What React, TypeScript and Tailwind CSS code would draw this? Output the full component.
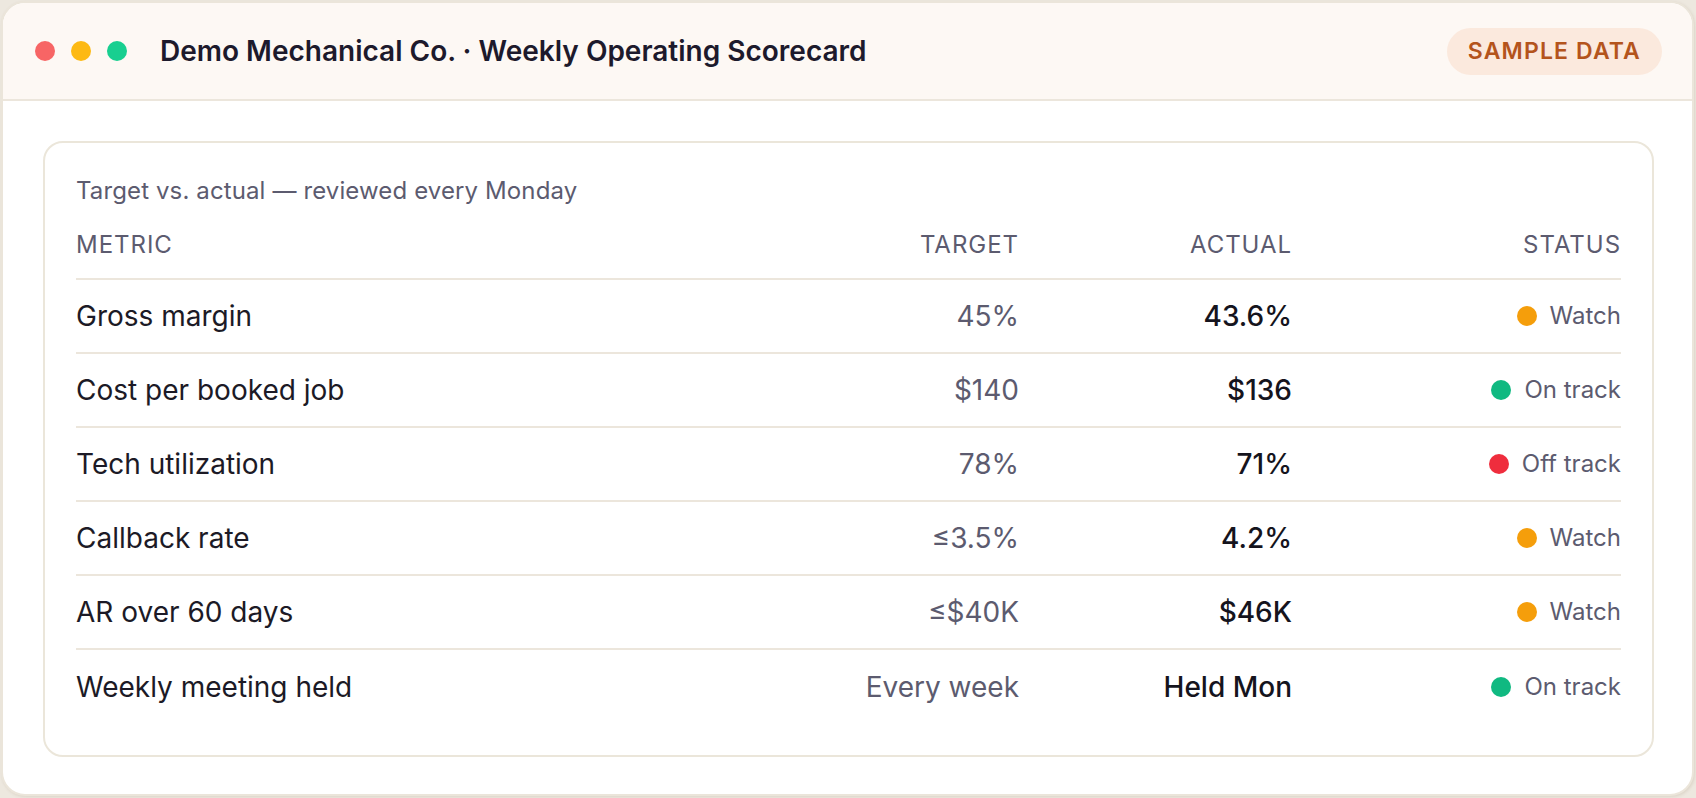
type Status = "watch" | "on" | "off";

const rows: { metric: string; target: string; actual: string; status: Status }[] = [
  { metric: "Gross margin", target: "45%", actual: "43.6%", status: "watch" },
  { metric: "Cost per booked job", target: "$140", actual: "$136", status: "on" },
  { metric: "Tech utilization", target: "78%", actual: "71%", status: "off" },
  { metric: "Callback rate", target: "≤3.5%", actual: "4.2%", status: "watch" },
  { metric: "AR over 60 days", target: "≤$40K", actual: "$46K", status: "watch" },
  { metric: "Weekly meeting held", target: "Every week", actual: "Held Mon", status: "on" },
];

const statusMeta: Record<Status, { label: string; dot: string }> = {
  watch: { label: "Watch", dot: "bg-[#f59e0b]" },
  on: { label: "On track", dot: "bg-[#10b981]" },
  off: { label: "Off track", dot: "bg-[#ef2d3d]" },
};

const StatusPill = ({ status }: { status: Status }) => {
  const meta = statusMeta[status];
  return (
    <div className="flex items-center justify-end gap-[13px]">
      <span className={`w-[20px] h-[20px] rounded-full ${meta.dot}`} />
      <span className="text-[24px] text-[#5c5b6f]">{meta.label}</span>
    </div>
  );
};

const App = () => {
  return (
    <div className="w-[1696px] h-[798px] bg-[#ede8df] p-px font-['Inter',sans-serif]">
      <div className="w-[1693px] h-[795px] bg-white border-2 border-[#ebe5da] rounded-[24px] overflow-hidden flex flex-col shadow-[1px_1px_3px_rgba(120,100,70,0.15)]">
        {/* title bar */}
        <div className="h-[98px] shrink-0 bg-[#fdf8f4] border-b-2 border-[#ece6dc] pl-[32px] pr-[30px] flex items-center">
          <div className="flex items-center gap-[16px]">
            <span className="w-[20px] h-[20px] rounded-full bg-[#f76565]" />
            <span className="w-[20px] h-[20px] rounded-full bg-[#fdb913]" />
            <span className="w-[20px] h-[20px] rounded-full bg-[#18cf90]" />
          </div>
          <h1 className="ml-[33px] text-[28px] font-semibold text-[#1d1a2c]">
            Demo Mechanical Co. · Weekly Operating Scorecard
          </h1>
          <span className="ml-auto h-[47px] px-[21px] rounded-full bg-[#fbe9dd] text-[#b4541c] text-[23px] font-semibold tracking-[0.05em] flex items-center">
            SAMPLE DATA
          </span>
        </div>

        {/* body */}
        <div className="pl-[40px] pr-[38px] pt-[40px]">
          <div className="border-2 border-[#ebe6da] rounded-[20px] px-[31px] pt-[33px] pb-[31px]">
            <p className="text-[24px] leading-[30px] tracking-[0.005em] text-[#5c5b6f] mb-[6px]">
              Target vs. actual — reviewed every Monday
            </p>
            <div className="grid grid-cols-[669px_274px_273px_1fr] py-[18px] border-b-2 border-[#ece6dc] text-[24px] leading-[30px] tracking-[0.04em] text-[#5c5b6f]">
              <div>METRIC</div>
              <div className="text-right">TARGET</div>
              <div className="text-right">ACTUAL</div>
              <div className="text-right">STATUS</div>
            </div>
            {rows.map((r, i) => (
              <div
                key={r.metric}
                className={`grid grid-cols-[669px_274px_273px_1fr] items-center h-[74px] ${
                  i < rows.length - 1 ? "border-b-2 border-[#ece6dc]" : ""
                }`}
              >
                <div className="text-[28px] text-[#1c1a26]">{r.metric}</div>
                <div className="text-right text-[28px] text-[#5c5b6f]">{r.target}</div>
                <div className="text-right text-[28px] font-medium text-[#15141d]">{r.actual}</div>
                <StatusPill status={r.status} />
              </div>
            ))}
          </div>
        </div>
      </div>
    </div>
  );
};

export default App;
